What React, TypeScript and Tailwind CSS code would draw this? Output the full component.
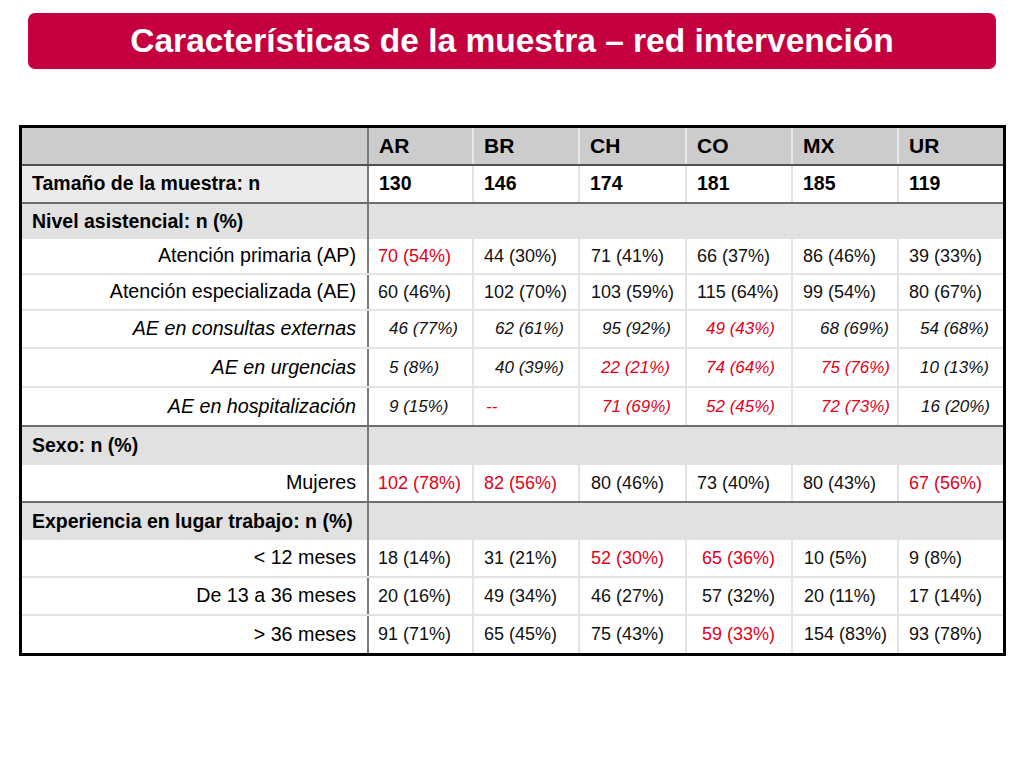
import React from 'react';

// ─────────────────────────────────────────────────────────────────────────────
// Slide: Características de la muestra – red intervención
// ─────────────────────────────────────────────────────────────────────────────

type Cell = { v: string; red?: boolean; pl?: string };
type Line = 'none' | 'light' | 'dark';

type Row =
  | { kind: 'section'; label: string; h: string; line: Line }
  | { kind: 'data'; label: string; italic?: boolean; h: string; line: Line; cells: Cell[] };

const GRID = 'grid grid-cols-[347px_105px_106px_107px_106px_106px_104px]';

const LINE: Record<Line, string> = {
  none: '',
  light: 'border-b-2 border-[#e3e3e3]',
  dark: 'border-b-2 border-[#6e6e6e]',
};

const c = (v: string, pl = 'pl-[10px]', red = false): Cell => ({ v, pl, red });

const ROWS: Row[] = [
  { kind: 'section', label: 'Nivel asistencial: n (%)', h: 'h-[35px]', line: 'none' },
  {
    kind: 'data', label: 'Atención primaria (AP)', h: 'h-[36px]', line: 'light',
    cells: [c('70 (54%)', 'pl-[9px]', true), c('44 (30%)'), c('71 (41%)', 'pl-[11px]'), c('66 (37%)'), c('86 (46%)'), c('39 (33%)')],
  },
  {
    kind: 'data', label: 'Atención especializada (AE)', h: 'h-[36px]', line: 'light',
    cells: [c('60 (46%)', 'pl-[9px]'), c('102 (70%)'), c('103 (59%)', 'pl-[11px]'), c('115 (64%)'), c('99 (54%)'), c('80 (67%)')],
  },
  {
    kind: 'data', label: 'AE en consultas externas', italic: true, h: 'h-[38px]', line: 'light',
    cells: [c('46 (77%)', 'pl-[20px]'), c('62 (61%)', 'pl-[21px]'), c('95 (92%)', 'pl-[22px]'), c('49 (43%)', 'pl-[19px]', true), c('68 (69%)', 'pl-[27px]'), c('54 (68%)', 'pl-[21px]')],
  },
  {
    kind: 'data', label: 'AE en urgencias', italic: true, h: 'h-[39px]', line: 'light',
    cells: [c('5 (8%)', 'pl-[20px]'), c('40 (39%)', 'pl-[21px]'), c('22 (21%)', 'pl-[21px]', true), c('74 (64%)', 'pl-[19px]', true), c('75 (76%)', 'pl-[28px]', true), c('10 (13%)', 'pl-[21px]')],
  },
  {
    kind: 'data', label: 'AE en hospitalización', italic: true, h: 'h-[39px]', line: 'dark',
    cells: [c('9 (15%)', 'pl-[20px]'), c('--', 'pl-[12px]', true), c('71 (69%)', 'pl-[22px]', true), c('52 (45%)', 'pl-[19px]', true), c('72 (73%)', 'pl-[28px]', true), c('16 (20%)', 'pl-[22px]')],
  },
  { kind: 'section', label: 'Sexo: n (%)', h: 'h-[38px]', line: 'none' },
  {
    kind: 'data', label: 'Mujeres', h: 'h-[38px]', line: 'dark',
    cells: [c('102 (78%)', 'pl-[9px]', true), c('82 (56%)', 'pl-[10px]', true), c('80 (46%)', 'pl-[11px]'), c('73 (40%)'), c('80 (43%)'), c('67 (56%)', 'pl-[10px]', true)],
  },
  { kind: 'section', label: 'Experiencia en lugar trabajo: n (%)', h: 'h-[37px]', line: 'none' },
  {
    kind: 'data', label: '< 12 meses', h: 'h-[38px]', line: 'light',
    cells: [c('18 (14%)', 'pl-[9px]'), c('31 (21%)'), c('52 (30%)', 'pl-[11px]', true), c('65 (36%)', 'pl-[15px]', true), c('10 (5%)', 'pl-[11px]'), c('9 (8%)')],
  },
  {
    kind: 'data', label: 'De 13 a 36 meses', h: 'h-[38px]', line: 'light',
    cells: [c('20 (16%)', 'pl-[9px]'), c('49 (34%)'), c('46 (27%)', 'pl-[11px]'), c('57 (32%)', 'pl-[15px]'), c('20 (11%)', 'pl-[11px]'), c('17 (14%)')],
  },
  {
    kind: 'data', label: '> 36 meses', h: 'h-[37px]', line: 'none',
    cells: [c('91 (71%)', 'pl-[9px]'), c('65 (45%)'), c('75 (43%)', 'pl-[11px]'), c('59 (33%)', 'pl-[15px]', true), c('154 (83%)', 'pl-[11px]'), c('93 (78%)')],
  },
];

const COUNTRIES = ['AR', 'BR', 'CH', 'CO', 'MX', 'UR'];
const SIZES = ['130', '146', '174', '181', '185', '119'];

function DataRow({ row }: { row: Extract<Row, { kind: 'data' }> }) {
  return (
    <div className={`${GRID} ${row.h} ${LINE[row.line]} bg-white`}>
      <div
        className={`flex items-center justify-end pr-[11px] border-r-2 border-[#7a7a7a] text-[19.7px] text-black ${row.italic ? 'italic' : ''}`}
      >
        {row.label}
      </div>
      {row.cells.map((cell, i) => (
        <div
          key={i}
          className={`flex items-center ${cell.pl} ${i < 5 ? 'border-r-2 border-[#e3e3e3]' : ''} ${
            row.italic ? 'italic text-[17px]' : 'text-[18px]'
          } ${cell.red ? 'text-[#e2001a]' : 'text-[#111]'}`}
        >
          {cell.v}
        </div>
      ))}
    </div>
  );
}

function SectionRow({ row }: { row: Extract<Row, { kind: 'section' }> }) {
  return (
    <div className={`${GRID} ${row.h} ${LINE[row.line]} bg-[#e1e1e1]`}>
      <div className="flex items-center pl-[10px] border-r-2 border-[#7a7a7a] text-[19.5px] font-bold text-black">
        {row.label}
      </div>
      <div className="col-span-6" />
    </div>
  );
}

export default function App() {
  return (
    <div className="w-[1024px] h-[768px] bg-white font-['Liberation_Sans',Arial,sans-serif] overflow-hidden">
      {/* Title bar */}
      <div className="mx-[28px] mt-[13px] h-[56px] rounded-[7px] bg-[#c4003f] flex items-center justify-center">
        <h1 className="font-bold text-white text-[33.5px] leading-none">
          Características de la muestra – red intervención
        </h1>
      </div>

      {/* Table */}
      <div className="ml-[19px] mt-[56px] w-[987px] border-[3px] border-black">
        {/* Header */}
        <div className={`${GRID} h-[38px] bg-[#cccccc] border-b-2 border-[#505050]`}>
          <div className="border-r-2 border-[#7a7a7a]" />
          {COUNTRIES.map((k, i) => (
            <div
              key={k}
              className={`flex items-center pl-[10px] text-[21px] font-bold text-black ${
                i < 5 ? 'border-r-2 border-[#e8e8e8]' : ''
              }`}
            >
              {k}
            </div>
          ))}
        </div>

        {/* Sample size */}
        <div className={`${GRID} h-[38px] bg-white border-b-2 border-[#6e6e6e]`}>
          <div className="flex items-center pl-[10px] bg-[#ebebeb] border-r-2 border-[#7a7a7a] text-[19.5px] font-bold text-black">
            Tamaño de la muestra: n
          </div>
          {SIZES.map((n, i) => (
            <div
              key={i}
              className={`flex items-center pl-[10px] text-[19.5px] font-bold text-black ${
                i < 5 ? 'border-r-2 border-[#e3e3e3]' : ''
              }`}
            >
              {n}
            </div>
          ))}
        </div>

        {ROWS.map((row, i) =>
          row.kind === 'section' ? <SectionRow key={i} row={row} /> : <DataRow key={i} row={row} />,
        )}
      </div>
    </div>
  );
}
